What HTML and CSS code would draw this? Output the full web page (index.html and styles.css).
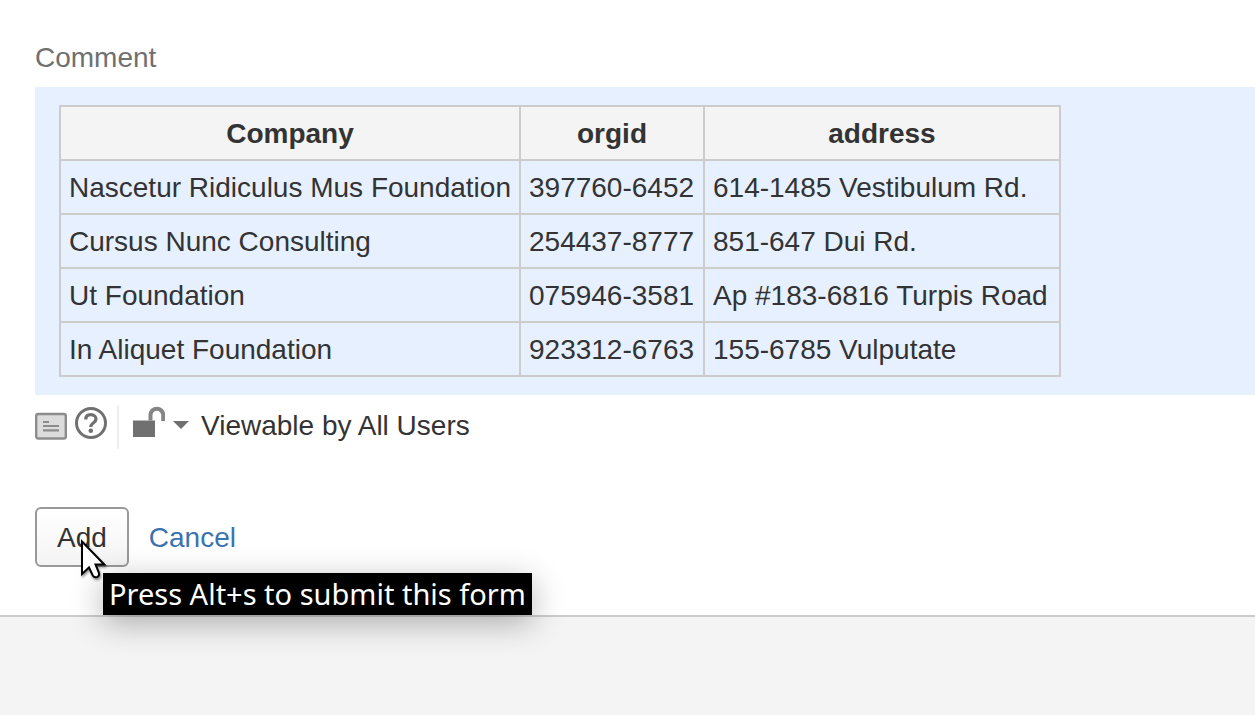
FILE: index.html
```
<!DOCTYPE html>
<html lang="en">
<head>
<meta charset="utf-8">
<meta name="viewport" content="width=device-width, initial-scale=1">
<title>Comment</title>
<link rel="stylesheet" href="styles.css">
</head>
<body>
<main class="comment-form">
  <h1 class="field-label">Comment</h1>
  <section class="preview">
    <table class="preview-table">
      <colgroup><col class="col-company"><col class="col-orgid"><col class="col-address"></colgroup>
      <thead>
        <tr><th scope="col">Company</th><th scope="col">orgid</th><th scope="col">address</th></tr>
      </thead>
      <tbody>
        <tr><td>Nascetur Ridiculus Mus Foundation</td><td>397760-6452</td><td>614-1485 Vestibulum Rd.</td></tr>
        <tr><td>Cursus Nunc Consulting</td><td>254437-8777</td><td>851-647 Dui Rd.</td></tr>
        <tr><td>Ut Foundation</td><td>075946-3581</td><td>Ap #183-6816 Turpis Road</td></tr>
        <tr><td>In Aliquet Foundation</td><td>923312-6763</td><td>155-6785 Vulputate</td></tr>
      </tbody>
    </table>
  </section>
  <div class="toolbar">
    <div class="tools">
      <button class="icon-button" type="button" aria-label="Preview">
        <svg width="32" height="33" viewBox="0 0 32 33">
          <rect x="1.200" y="7" width="29.600" height="24.500" rx="2" fill="#dcdcdc" stroke="#8c8c8c" stroke-width="2.400"/>
          <path d="M8 15h6M8 19h16M8 23.300h16" stroke="#8c8c8c" stroke-width="2.200" fill="none"/>
        </svg>
      </button>
      <button class="icon-button" type="button" aria-label="Help">
        <svg width="32" height="32" viewBox="0 0 32 32">
          <circle cx="16" cy="16" r="14.500" fill="none" stroke="#707070" stroke-width="3"/>
          <path d="M10.800 12.500C10.800 9.500 12.800 7.700 15.800 7.700s5.200 1.800 5.200 4.300c0 2-1.200 2.900-2.700 4C16.500 17.200 15.800 18 15.800 20" fill="none" stroke="#707070" stroke-width="3.200"/>
          <circle cx="15.800" cy="23.700" r="2.300" fill="#707070"/>
        </svg>
      </button>
    </div>
    <button class="visibility" type="button">
      <svg class="lock" width="32" height="32" viewBox="0 0 32 32">
        <path d="M0 14.500h22V31H0z" fill="#707070"/>
        <path d="M17.500 14.500V9a6.300 6.300 0 0 1 12.700 0v6" fill="none" stroke="#858585" stroke-width="4"/>
      </svg>
      <svg class="caret" width="16" height="8" viewBox="0 0 16 8"><path d="M0 0h16L8 8z" fill="#707070"/></svg>
      <span>Viewable by All Users</span>
    </button>
  </div>
  <div class="actions">
    <div class="submit">
      <button class="add" type="submit" aria-describedby="add-tip">Add</button>
      <div class="tooltip" id="add-tip" role="tooltip">Press Alt+s to submit this form</div>
      <svg class="cursor" width="30" height="42" viewBox="0 0 30 42" aria-hidden="true">
        <path d="M2 2.500V35L9 28.500 12.800 36.500Q14.500 39.200 17.500 37.800 20 36.200 18.800 33.500L15.500 25.500H24.300Z" fill="#fff" stroke="#000" stroke-width="2"/>
      </svg>
    </div>
    <a class="cancel" href="#">Cancel</a>
  </div>
</main>
<footer class="page-footer"></footer>
</body>
</html>
```
FILE: styles.css
```
* { box-sizing: border-box; }

body {
  margin: 0;
  min-height: 100vh;
  display: flex;
  flex-direction: column;
  background: #fff;
  color: #333;
  font: 28px/40px "Liberation Sans", Arial, sans-serif;
}

button {
  font: inherit;
  color: inherit;
  cursor: default;
}

svg { display: block; }

.comment-form { padding: 38px 0 48px 35px; }

.field-label {
  margin: 0;
  font-size: 28px;
  font-weight: 400;
  color: #707070;
}

.preview {
  margin-top: 9px;
  padding: 18px 24px;
  background: #e6f0ff;
}

.preview-table { border-collapse: collapse; }

.col-company { width: 460px; }
.col-orgid { width: 184px; }
.col-address { width: 356px; }

.preview-table th,
.preview-table td {
  padding: 7px 8px 5px;
  border: 2px solid #ccc;
  text-align: left;
}

.preview-table th {
  background: #f4f4f4;
  text-align: center;
}

.toolbar {
  display: flex;
  margin-top: 10px;
}

.tools {
  display: flex;
  gap: 8px;
  padding: 2px 10px 0 0;
  height: 44px;
  border-right: 2px solid #eee;
}

.icon-button,
.visibility {
  padding: 0;
  border: 0;
  background: none;
}

.icon-button { height: 32px; }

.visibility {
  display: flex;
  align-items: flex-start;
  margin-left: 14px;
}

.lock { margin-top: 1px; }

.caret { margin: 16px 12px 0 8px; }

.visibility span { padding-top: 1px; }

.actions {
  display: flex;
  align-items: center;
  gap: 20px;
  margin-top: 58px;
}

.submit { position: relative; }

.add {
  display: block;
  height: 60px;
  padding: 2px 20px 0;
  border: 2px solid #999;
  border-radius: 6px;
  background: linear-gradient(#fff, #f4f4f4);
}

.cancel {
  padding-top: 2px;
  color: #3b73af;
  text-decoration: none;
}

.tooltip {
  position: absolute;
  z-index: 1;
  left: 68px;
  top: 66px;
  padding: 1px 6px;
  background: #000;
  color: #fff;
  font-family: "Noto Sans", sans-serif;
  font-size: 29px;
  white-space: nowrap;
  box-shadow: 0 8px 32px rgba(0, 0, 0, 0.3);
}

.cursor {
  position: absolute;
  z-index: 2;
  left: 45px;
  top: 32px;
  filter: drop-shadow(1px 2px 1px rgba(0, 0, 0, 0.4));
}

.page-footer {
  flex: 1;
  border-top: 2px solid #ccc;
  background: #f4f4f4;
}
```
